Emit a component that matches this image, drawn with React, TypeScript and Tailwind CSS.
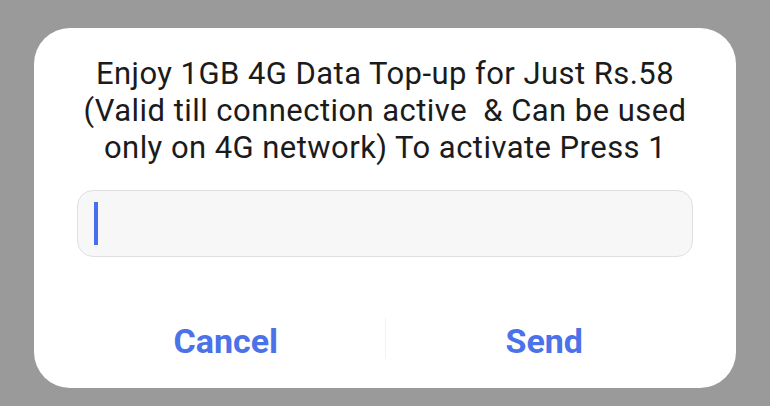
import React from "react";

export default function App() {
  return (
    <div className="w-[770px] h-[406px] bg-[#9a9a9a] flex items-start justify-center pt-[28px]" style={{ fontFamily: "Roboto, 'Noto Sans', sans-serif" }}>
      <div className="w-[702px] h-[360px] bg-white rounded-[36px] flex flex-col items-center pt-[27px]">
        <p className="text-[31px] leading-[37px] tracking-[0.45px] text-[#1b1b1b] text-center w-[660px] whitespace-nowrap">
          Enjoy 1GB 4G Data Top-up for Just Rs.58
          <br />
          (Valid till connection active&nbsp; &amp; Can be used
          <br />
          only on 4G network) To activate Press 1
        </p>
        <div className="mt-[24px] w-[616px] h-[67px] rounded-[16px] bg-[#f7f7f7] border border-[#e0e0e0] flex items-center pl-[16px]">
          <div className="w-[4px] h-[43px] bg-[#4a6cf0]" />
        </div>
        <div className="mt-[60px] w-full px-[33px] flex items-center h-[42px]">
          <div className="flex-1 flex justify-center">
            <span className="text-[34px] font-bold text-[#4b72e8] leading-none pt-[6px]">Cancel</span>
          </div>
          <div className="w-px h-[42px] bg-[#f2f2f2]" />
          <div className="flex-1 flex justify-center">
            <span className="text-[34px] font-bold text-[#4b72e8] leading-none pt-[6px]">Send</span>
          </div>
        </div>
      </div>
    </div>
  );
}
